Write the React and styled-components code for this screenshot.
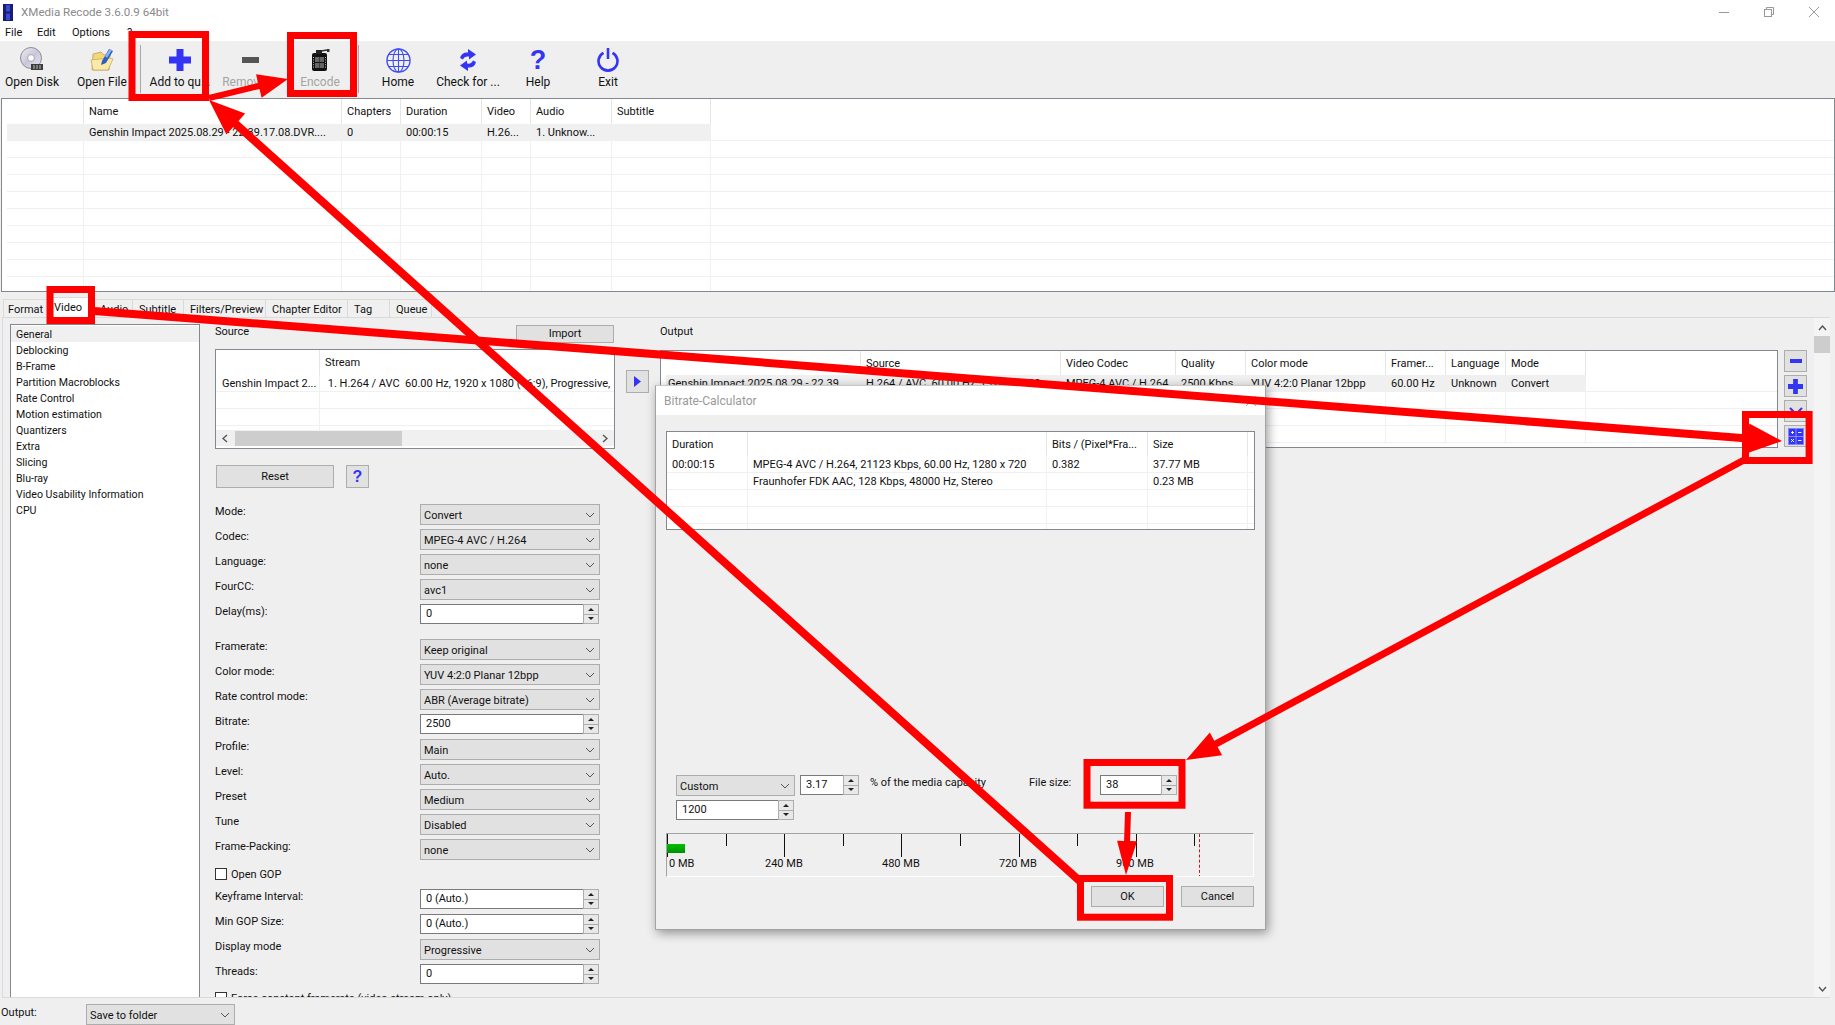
import styled, { createGlobalStyle } from "styled-components"

const GlobalStyle = createGlobalStyle`
  html, body { margin: 0; padding: 0; background: #efefef; }
  * { box-sizing: border-box; }
`

const Page = styled.div`
  position: relative;
  width: 1835px;
  height: 1025px;
  overflow: hidden;
  background: #efefef;
  color: #111;
  font-family: Roboto, "Liberation Sans", sans-serif;
  font-size: 11px;
  line-height: 14px;
`

const TitleBar = styled.div`
  display: flex;
  align-items: center;
  height: 22px;
  padding: 2px 16px 0 3px;
  background: #fff;
  color: #8a8a8a;
  font-size: 11.6px;
  gap: 8px;
`
const WindowButtons = styled.div`
  margin-left: auto;
  display: flex;
  gap: 35px;
  align-items: center;
`
const MenuBar = styled.div`
  display: flex;
  height: 19px;
  padding: 4px 0 0 5px;
  background: #fff;
`
const MenuItem = styled.span`
  width: ${p => p.$w}px;
`

const Toolbar = styled.div`
  display: flex;
  height: 57px;
`
const ToolButton = styled.div`
  width: ${p => p.$w || 70}px;
  padding: 7px ${p => (p.$w ? 3 : 0)}px 0 0;
  display: flex;
  flex-direction: column;
  align-items: center;
  gap: 3px;
  font-size: 12px;
  white-space: nowrap;
  color: ${p => (p.$off ? "#a4a4a4" : "#111")};
`
const IconSlot = styled.div`
  height: 24px;
  display: flex;
  align-items: center;
  justify-content: center;
`
const HelpMark = styled.span`
  font: bold ${p => p.$size}px/${p => p.$line}px "Liberation Sans", sans-serif;
  color: #3434f5;
`
const ToolSep = styled.div`
  width: 1px;
  height: 48px;
  margin: 4px 4px 0 3px;
  background: #a8a8a8;
`

const Table = styled.div`
  display: flex;
  flex-direction: column;
  overflow: hidden;
  width: ${p => p.$w};
  height: ${p => p.$h}px;
  margin-left: ${p => p.$ml || 0}px;
  padding-left: ${p => p.$pad || 0}px;
  background: #fff;
  border: 1px solid #828790;
`
const TableBody = styled.div`
  flex: 1;
  min-height: 0;
  overflow: hidden;
`
const Row = styled.div`
  display: grid;
  grid-template-columns: ${p => p.$cols};
  height: ${p => p.$height}px;
`
const HeadCell = styled.div`
  padding: 6px 0 0 ${p => p.$x || 5}px;
  border-right: ${p => (p.$last ? "none" : "1px solid #e6e6e6")};
  white-space: nowrap;
  overflow: hidden;
`
const Cell = styled.div`
  padding: 2px 0 0 ${p => p.$x || 5}px;
  border-bottom: 1px solid #f0f0f0;
  border-right: ${p => (p.$last ? "none" : "1px solid #f0f0f0")};
  background: ${p => (p.$hl ? "#f0f0f0" : "#fff")};
  white-space: pre;
  overflow: hidden;
  min-width: 0;
`

function GridTable({ cols, head, rows, blanks, headHeight, hl, firstX, w, h, ml, pad, children }) {
  const count = cols.trim().split(" ").length
  const blank = new Array(count).fill("")
  const all = [...rows, ...new Array(blanks).fill(blank)]
  return (
    <Table $w={w} $h={h} $ml={ml} $pad={pad}>
      <Row $cols={cols} $height={headHeight}>
        {head.map((t, i) => (
          <HeadCell key={i} $last={i === count - 1} $x={i === 0 ? firstX : undefined}>{t}</HeadCell>
        ))}
      </Row>
      <TableBody>
        {all.map((r, ri) => (
          <Row key={ri} $cols={cols} $height={17}>
            {r.map((t, i) => (
              <Cell
                key={i}
                $last={i === count - 1}
                $hl={hl && ri === 0 && i < count - 1}
                $x={i === 0 ? firstX : undefined}
              >
                {t}
              </Cell>
            ))}
          </Row>
        ))}
      </TableBody>
      {children}
    </Table>
  )
}

const Tabs = styled.div`
  display: flex;
  height: 25px;
  padding: 7px 0 0 3px;
`
const Tab = styled.div`
  width: ${p => p.$w}px;
  height: ${p => (p.$on ? 21 : 18)}px;
  margin-top: ${p => (p.$on ? -2 : 0)}px;
  padding: ${p => (p.$on ? 3 : 3)}px 0 0 ${p => (p.$first ? 4 : p.$on ? 3 : 6)}px;
  background: ${p => (p.$on ? "#fff" : "#f0f0f0")};
  border: 1px solid #dadada;
  border-bottom: none;
  border-left-width: ${p => (p.$first ? 1 : 0)}px;
  white-space: nowrap;
`

const Panel = styled.div`
  display: flex;
  align-items: flex-start;
  height: 681px;
  margin: 0 5px 0 2px;
  padding-left: 7px;
  overflow: hidden;
  border: 1px solid #dadada;
  border-right: none;
`
const SideList = styled.div`
  flex: none;
  width: 190px;
  height: 700px;
  margin-top: 6px;
  padding: 1px 0 0 0;
  background: #fff;
  border: 1px solid #828790;
`
const SideItem = styled.div`
  height: 16px;
  padding: 2px 0 0 5px;
  font-size: 10.6px;
  background: ${p => (p.$on ? "#f0f0f0" : "transparent")};
`
const Column = styled.div`
  flex: none;
  width: ${p => p.$w}px;
  margin: 7px 0 0 ${p => p.$ml}px;
`
const SectionHead = styled.div`
  display: flex;
  justify-content: space-between;
  height: ${p => p.$h}px;
  margin-bottom: ${p => p.$mb}px;
`
const Button = styled.div`
  display: flex;
  align-items: center;
  justify-content: center;
  flex: none;
  width: ${p => p.$w}px;
  height: ${p => p.$h}px;
  margin-left: ${p => p.$ml || 0}px;
  margin-right: ${p => p.$mr || 0}px;
  margin-top: ${p => p.$mt || 0}px;
  background: #e1e1e1;
  border: 1px solid #adadad;
`
const ResetRow = styled.div`
  display: flex;
  margin: 16px 0;
`
const FormRow = styled.div`
  display: grid;
  grid-template-columns: 205px 180px;
  height: 21px;
  margin-bottom: ${p => p.$mb || 4}px;
`
const FormLabel = styled.span`
  padding-top: 1px;
`
const CheckRow = styled.div`
  display: flex;
  align-items: flex-start;
  gap: 4px;
  height: 21px;
  margin-bottom: 4px;
  padding-top: ${p => p.$top}px;
  white-space: nowrap;
`
const CheckBox = styled.div`
  flex: none;
  width: 12px;
  height: 12px;
  background: #fff;
  border: 1px solid #333;
`
const SelectBox = styled.div`
  display: flex;
  align-items: center;
  justify-content: space-between;
  width: ${p => (p.$w ? `${p.$w}px` : "auto")};
  height: 21px;
  padding: 0 4px 0 3px;
  background: #e1e1e1;
  border: 1px solid #adadad;
`
const SelectText = styled.span`
  padding-top: 2px;
`
const SpinBox = styled.div`
  display: flex;
  width: ${p => (p.$w ? `${p.$w}px` : "auto")};
  height: 20px;
  padding-right: 1px;
`
const SpinText = styled.div`
  flex: 1;
  padding: 2px 0 0 5px;
  background: #fff;
  border: 1px solid #7a7a7a;
  border-right: none;
`
const SpinArrows = styled.div`
  flex: none;
  display: flex;
  flex-direction: column;
  width: 16px;
  background: #efefef;
  border: 1px solid #adadad;
`
const SpinPart = styled.div`
  flex: 1;
  display: flex;
  align-items: center;
  justify-content: center;
  background: #e8e8e8;
  border-top: ${p => (p.$down ? "1px solid #adadad" : "none")};
`
const ArrowUp = styled.div`
  width: 0;
  height: 0;
  border-left: 3px solid transparent;
  border-right: 3px solid transparent;
  border-${p => (p.$down ? "top" : "bottom")}: 3px solid #222;
`

const HScroll = styled.div`
  flex: none;
  display: flex;
  align-items: center;
  height: 16px;
  margin: 0 0 2px;
  background: #f0f0f0;
`
const HThumb = styled.div`
  width: 167px;
  height: 15px;
  margin: 0 auto 0 1px;
  background: #cdcdcd;
`
const ScrollEnd = styled.span`
  flex: none;
  width: 18px;
  display: flex;
  justify-content: center;
`

const SideButtons = styled.div`
  flex: none;
  display: flex;
  flex-direction: column;
  gap: 3px;
  margin: 32px 0 0 6px;
`
const VScroll = styled.div`
  flex: none;
  display: flex;
  flex-direction: column;
  align-items: center;
  width: 16px;
  height: 680px;
  margin-left: 7px;
  padding-top: 7px;
  background: #f4f4f4;
`
const VThumb = styled.div`
  width: 16px;
  height: 17px;
  margin: 5px 0 auto;
  background: #cdcdcd;
`

const OutputRow = styled.div`
  display: flex;
  padding: 6px 0 0 1px;
`
const OutputLabel = styled.div`
  width: 85px;
  padding-top: 2px;
`

const Dialog = styled.div`
  position: absolute;
  left: 655px;
  top: 385px;
  width: 611px;
  height: 545px;
  background: #efefef;
  border: 1px solid #a3a3a3;
  border-top-color: #c8c8c8;
  box-shadow: 2px 3px 10px rgba(0, 0, 0, 0.4);
  z-index: 5;
`
const DialogTitle = styled.div`
  display: flex;
  align-items: center;
  justify-content: space-between;
  height: 29px;
  padding: 0 9px 0 8px;
  background: #fff;
  color: #999;
  font-size: 12px;
`
const DialogBody = styled.div`
  padding: 16px 11px 0 10px;
`
const CalcRow = styled.div`
  display: flex;
  align-items: flex-start;
  margin-top: ${p => p.$mt}px;
  padding-left: 10px;
`
const CalcLabel = styled.div`
  flex: none;
  width: ${p => p.$w}px;
  margin-left: ${p => p.$ml || 0}px;
  padding-top: 1px;
  white-space: nowrap;
`
const Ruler = styled.div`
  position: relative;
  height: 44px;
  margin-top: 13px;
  overflow: hidden;
  border: 1px solid #fff;
  border-top-color: #a3a3a3;
  border-left-color: #a3a3a3;
`
const TickRow = styled.div`
  display: flex;
  height: 23px;
`
const Tick = styled.div`
  flex: none;
  width: 58.6px;
  height: ${p => (p.$major ? 23 : 12)}px;
  border-left: 1px solid #111;
`
const RulerLabels = styled.div`
  display: flex;
  padding-left: 2px;
  white-space: nowrap;
`
const RulerLabel = styled.div`
  flex: none;
  width: ${p => p.$w}px;
`
const UsedBar = styled.div`
  position: absolute;
  left: 0;
  top: 10px;
  width: 18px;
  height: 9px;
  background: linear-gradient(#00c000, #009000);
`
const LimitLine = styled.div`
  position: absolute;
  left: 532px;
  top: 0;
  height: 44px;
  border-left: 1px dashed #c8141e;
`
const DialogButtons = styled.div`
  display: flex;
  justify-content: flex-end;
  gap: 17px;
  margin-top: 9px;
`
const Overlay = styled.svg`
  position: absolute;
  left: 0;
  top: 0;
  z-index: 10;
  pointer-events: none;
`

const blue = "#3434f5"

const Chevron = () => (
  <svg width="10" height="6" viewBox="0 0 10 6"><path d="M1 1l4 4 4-4" fill="none" stroke="#555" /></svg>
)
const Select = ({ value, w }) => (
  <SelectBox $w={w}><SelectText>{value}</SelectText><Chevron /></SelectBox>
)
const Spin = ({ value, w }) => (
  <SpinBox $w={w}>
    <SpinText>{value}</SpinText>
    <SpinArrows>
      <SpinPart><ArrowUp /></SpinPart>
      <SpinPart $down><ArrowUp $down /></SpinPart>
    </SpinArrows>
  </SpinBox>
)

const FilmIcon = () => (
  <svg width="10" height="17" viewBox="0 0 10 17">
    <rect width="10" height="17" fill="#1c1c6e" />
    <rect x="3" y="1" width="4" height="6.5" fill="#3a49d8" />
    <rect x="3" y="9.5" width="4" height="6.5" fill="#3a49d8" />
  </svg>
)
const DiskIcon = () => (
  <svg width="26" height="26" viewBox="0 0 26 26">
    <defs>
      <linearGradient id="cd" x1="0" y1="0" x2="1" y2="1">
        <stop offset="0" stopColor="#eef0f4" />
        <stop offset="0.5" stopColor="#c9c6dc" />
        <stop offset="1" stopColor="#e8e8ee" />
      </linearGradient>
    </defs>
    <circle cx="12" cy="11" r="10.5" fill="url(#cd)" stroke="#8d8d94" />
    <circle cx="12" cy="11" r="3.4" fill="#fff" stroke="#a5a5ad" />
    <rect x="12" y="17" width="12" height="6" fill="#3c3c3c" />
    <path d="M14 19h8M14 21h8" stroke="#ddd" strokeWidth="0.8" strokeDasharray="2 1" />
  </svg>
)
const FolderIcon = () => (
  <svg width="26" height="26" viewBox="0 0 26 26">
    <path d="M4 7l8-2 3 3 6-1-1 16H3z" fill="#f3d67a" stroke="#b8964a" strokeWidth="0.7" />
    <path d="M2 13l19-2 3 1-5 11H4z" fill="#fbe9a8" stroke="#c4a452" strokeWidth="0.7" />
    <path d="M13 14l7-12 4 2-7 12-5 2z" fill="#2c5fc4" />
    <path d="M16 9l5-7 2 1-5 8z" fill="#8cb4ec" />
  </svg>
)
const PlusIcon = ({ size = 22 }) => (
  <svg width={size} height={size} viewBox="0 0 22 22">
    <path d="M7.5 0h7v7.5H22v7h-7.5V22h-7v-7.5H0v-7h7.5z" fill={blue} />
  </svg>
)
const MinusIcon = () => (
  <svg width="17" height="6" viewBox="0 0 17 6"><rect width="17" height="6" fill="#555" /></svg>
)
const EncodeIcon = () => (
  <svg width="20" height="22" viewBox="0 0 20 22">
    <path d="M4 4h11a2 2 0 0 1 2 2v14a2 2 0 0 1-2 2H4a2 2 0 0 1-2-2V6a2 2 0 0 1 2-2z" fill="#111" />
    <rect x="6" y="1" width="6" height="4" fill="#222" />
    <path d="M11 2l6-1" stroke="#333" strokeWidth="1.5" />
    <rect x="17" y="0" width="2.5" height="3" fill="#333" />
    <rect x="5" y="8" width="9" height="11" fill="#666" />
    <path d="M5 13.5h9" stroke="#111" />
    <path d="M9.5 8v11" stroke="#222" strokeWidth="0.6" />
    <path d="M3.5 8v11M15.5 8v11" stroke="#bbb" strokeDasharray="1 1.4" />
  </svg>
)
const GlobeIcon = () => (
  <svg width="25" height="25" viewBox="0 0 25 25" fill="none" stroke="#3d4df0" strokeWidth="1.1">
    <circle cx="12.5" cy="12.5" r="11.5" strokeWidth="1.4" />
    <ellipse cx="12.5" cy="12.5" rx="5.5" ry="11.5" />
    <path d="M12.5 1v23M1 12.5h23M2.8 6.5h19.4M2.8 18.5h19.4" />
  </svg>
)
const RefreshIcon = () => (
  <svg width="18" height="22" viewBox="0 0 18 22" fill={blue}>
    <path d="M1 9c1-4 4-6 8-5.500V0l8 5.500-7 5V7.500C7 7 5 8 4 10.500z" />
    <path d="M17 13c-1 4-4 6-8 5.500V22l-8-5.500 7-5v3c3 .5 5-.5 6-3z" />
  </svg>
)
const PowerIcon = () => (
  <svg width="22" height="24" viewBox="0 0 22 24" fill="none" stroke={blue} strokeWidth="2.6">
    <path d="M6.500 4.800a9.500 9.500 0 1 0 9 0" />
    <path d="M11 0v11" />
  </svg>
)
const ChevronX = () => (
  <svg width="14" height="9" viewBox="0 0 14 9"><path d="M1 1l6 6 6-6" fill="none" stroke={blue} strokeWidth="2" /></svg>
)
const CalcIcon = () => (
  <svg width="16" height="17" viewBox="0 0 16 17">
    <rect width="16" height="17" fill={blue} />
    <rect x="0.5" y="0.5" width="15" height="16" fill="none" stroke="#7f86fa" />
    <path d="M8 0v17M0 8.500h16" stroke="#9aa0fc" strokeWidth="0.8" />
    <path d="M3 4.500h3M4.500 3v3M10 4.500h3.500M3 11l3 3M6 11l-3 3M10 12.500h3.500" stroke="#fff" strokeWidth="0.9" />
  </svg>
)

function Arrow({ from, to, w = 7, hl = 36, hw = 26 }) {
  const dx = to[0] - from[0]
  const dy = to[1] - from[1]
  const len = Math.hypot(dx, dy)
  const ux = dx / len
  const uy = dy / len
  const bx = to[0] - ux * hl
  const by = to[1] - uy * hl
  const px = -uy
  const py = ux
  const pts = [
    [from[0] + (px * w) / 2, from[1] + (py * w) / 2],
    [bx + (px * w) / 2, by + (py * w) / 2],
    [bx + (px * hw) / 2, by + (py * hw) / 2],
    to,
    [bx - (px * hw) / 2, by - (py * hw) / 2],
    [bx - (px * w) / 2, by - (py * w) / 2],
    [from[0] - (px * w) / 2, from[1] - (py * w) / 2],
  ]
  return <polygon points={pts.map(p => p.join(",")).join(" ")} fill="#fe0000" />
}

const boxes = [
  [128.5, 31, 209, 101],
  [287, 32, 357, 97],
  [46.5, 286, 95, 324],
  [1742, 411, 1812.6, 464],
  [1083.5, 759, 1185.5, 808.7],
  [1077, 875, 1173, 920.7],
]

const sideItems = ["General", "Deblocking", "B-Frame", "Partition Macroblocks", "Rate Control", "Motion estimation", "Quantizers", "Extra", "Slicing", "Blu-ray", "Video Usability Information", "CPU"]

const formTop = [
  { l: "Mode:", v: "Convert" },
  { l: "Codec:", v: "MPEG-4 AVC / H.264" },
  { l: "Language:", v: "none" },
  { l: "FourCC:", v: "avc1" },
  { l: "Delay(ms):", v: "0", spin: true, mb: 14 },
  { l: "Framerate:", v: "Keep original" },
  { l: "Color mode:", v: "YUV 4:2:0 Planar 12bpp" },
  { l: "Rate control mode:", v: "ABR (Average bitrate)" },
  { l: "Bitrate:", v: "2500", spin: true },
  { l: "Profile:", v: "Main" },
  { l: "Level:", v: "Auto." },
  { l: "Preset", v: "Medium" },
  { l: "Tune", v: "Disabled" },
  { l: "Frame-Packing:", v: "none" },
]
const formBottom = [
  { l: "Keyframe Interval:", v: "0 (Auto.)", spin: true },
  { l: "Min GOP Size:", v: "0 (Auto.)", spin: true },
  { l: "Display mode", v: "Progressive" },
  { l: "Threads:", v: "0", spin: true },
]
const tabs = [["Format", 48], ["Video", 43], ["Audio", 39], ["Subtitle", 51], ["Filters/Preview", 82], ["Chapter Editor", 82], ["Tag", 42], ["Queue", 42]]

const FormRows = ({ items }) => items.map(r => (
  <FormRow key={r.l + r.v} $mb={r.mb}>
    <FormLabel>{r.l}</FormLabel>
    {r.spin ? <Spin value={r.v} /> : <Select value={r.v} />}
  </FormRow>
))

export default function App() {
  return (
    <Page>
      <GlobalStyle />
      <TitleBar>
        <FilmIcon />
        <span>XMedia Recode 3.6.0.9 64bit</span>
        <WindowButtons>
          <svg width="10" height="10" viewBox="0 0 10 10"><path d="M0 5.500h10" stroke="#999" /></svg>
          <svg width="10" height="10" viewBox="0 0 10 10" fill="none" stroke="#999"><rect x="0.500" y="2.500" width="7" height="7" /><path d="M2.500 2.500v-2h7v7h-2" /></svg>
          <svg width="10" height="10" viewBox="0 0 10 10"><path d="M0 0l10 10M10 0L0 10" stroke="#999" /></svg>
        </WindowButtons>
      </TitleBar>
      <MenuBar>
        <MenuItem $w={32}>File</MenuItem>
        <MenuItem $w={35}>Edit</MenuItem>
        <MenuItem $w={55}>Options</MenuItem>
        <MenuItem $w={10}>?</MenuItem>
      </MenuBar>
      <Toolbar>
        <ToolButton $w={67}><IconSlot><DiskIcon /></IconSlot>Open Disk</ToolButton>
        <ToolButton><IconSlot><FolderIcon /></IconSlot>Open File</ToolButton>
        <ToolSep />
        <ToolButton><IconSlot><PlusIcon /></IconSlot>Add to qu...</ToolButton>
        <ToolButton $off><IconSlot><MinusIcon /></IconSlot>Remove ...</ToolButton>
        <ToolButton $off><IconSlot><EncodeIcon /></IconSlot>Encode</ToolButton>
        <ToolSep />
        <ToolButton><IconSlot><GlobeIcon /></IconSlot>Home</ToolButton>
        <ToolButton><IconSlot><RefreshIcon /></IconSlot>Check for ...</ToolButton>
        <ToolButton><IconSlot><HelpMark $size={27} $line={24}>?</HelpMark></IconSlot>Help</ToolButton>
        <ToolButton><IconSlot><PowerIcon /></IconSlot>Exit</ToolButton>
      </Toolbar>

      <GridTable
        w="1834px"
        h={194}
        ml={1}
        pad={5}
        cols="77px 258px 59px 81px 49px 81px 99px 1fr"
        headHeight={25}
        hl
        head={["", "Name", "Chapters", "Duration", "Video", "Audio", "Subtitle", ""]}
        rows={[["", "Genshin Impact 2025.08.29 - 22.39.17.08.DVR....", "0", "00:00:15", "H.26...", "1. Unknow...", "", ""]]}
        blanks={10}
      />

      <Tabs>
        {tabs.map(([t, w], i) => (
          <Tab key={t} $w={w} $on={t === "Video"} $first={i === 0}>{t}</Tab>
        ))}
      </Tabs>

      <Panel>
        <SideList>
          {sideItems.map((t, i) => <SideItem key={t} $on={i === 0}>{t}</SideItem>)}
        </SideList>

        <Column $w={400} $ml={15}>
          <SectionHead $h={18} $mb={6}>
            <span>Source</span>
            <Button $w={98} $h={18} $mr={1}>Import</Button>
          </SectionHead>
          <GridTable
            w="400px"
            h={100}
            cols="104px 1fr"
            headHeight={25}
            firstX={6}
            head={["", "Stream"]}
            rows={[["Genshin Impact 2...", " 1. H.264 / AVC  60.00 Hz, 1920 x 1080 (16:9), Progressive,"]]}
            blanks={3}
          >
            <HScroll>
              <ScrollEnd><svg width="6" height="9" viewBox="0 0 6 9"><path d="M5 1L1 4.500 5 8" fill="none" stroke="#555" strokeWidth="1.4" /></svg></ScrollEnd>
              <HThumb />
              <ScrollEnd><svg width="6" height="9" viewBox="0 0 6 9"><path d="M1 1l4 3.500L1 8" fill="none" stroke="#555" strokeWidth="1.4" /></svg></ScrollEnd>
            </HScroll>
          </GridTable>
          <ResetRow>
            <Button $w={118} $h={23} $ml={1}>Reset</Button>
            <Button $w={23} $h={23} $ml={12}><HelpMark $size={16} $line={18}>?</HelpMark></Button>
          </ResetRow>
          <FormRows items={formTop} />
          <CheckRow $top={4}><CheckBox />Open GOP</CheckRow>
          <FormRows items={formBottom} />
          <CheckRow $top={3}><CheckBox />Force constant framerate (video stream only)</CheckRow>
        </Column>

        <Button $w={23} $h={23} $ml={11} $mt={52}>
          <svg width="7" height="11" viewBox="0 0 7 11"><path d="M0 0l7 5.500L0 11z" fill={blue} /></svg>
        </Button>

        <Column $w={1118} $ml={11}>
          <SectionHead $h={14} $mb={11}><span>Output</span></SectionHead>
          <GridTable
            w="1118px"
            h={98}
            pad={5}
            cols="195px 200px 115px 70px 140px 60px 60px 80px 1fr"
            headHeight={24}
            hl
            firstX={2}
            head={["", "Source", "Video Codec", "Quality", "Color mode", "Framer...", "Language", "Mode", ""]}
            rows={[["Genshin Impact 2025.08.29 - 22.39", "H.264 / AVC  60.00 Hz, 1920 x 1080", "MPEG-4 AVC / H.264", "2500 Kbps", "YUV 4:2:0 Planar 12bpp", "60.00 Hz", "Unknown", "Convert", ""]]}
            blanks={3}
          />
        </Column>

        <SideButtons>
          <Button $w={23} $h={22}><svg width="12" height="4" viewBox="0 0 12 4"><rect width="12" height="4" fill={blue} /></svg></Button>
          <Button $w={23} $h={22}><PlusIcon size={15} /></Button>
          <Button $w={23} $h={22}><ChevronX /></Button>
          <Button $w={23} $h={22}><CalcIcon /></Button>
        </SideButtons>

        <VScroll>
          <svg width="9" height="6" viewBox="0 0 9 6"><path d="M1 5l3.500-4L8 5" fill="none" stroke="#555" strokeWidth="1.4" /></svg>
          <VThumb />
          <svg width="9" height="12" viewBox="0 0 9 12"><path d="M1 1l3.500 4L8 1" fill="none" stroke="#555" strokeWidth="1.4" /></svg>
        </VScroll>
      </Panel>

      <OutputRow>
        <OutputLabel>Output:</OutputLabel>
        <Select value="Save to folder" w={149} />
      </OutputRow>

      <Dialog>
        <DialogTitle>
          <span>Bitrate-Calculator</span>
          <svg width="10" height="10" viewBox="0 0 10 10"><path d="M0 0l10 10M10 0L0 10" stroke="#aaa" /></svg>
        </DialogTitle>
        <DialogBody>
          <GridTable
            w="589px"
            h={99}
            cols="81px 299px 101px 100px 1fr"
            headHeight={24}
            head={["Duration", "", "Bits / (Pixel*Fra...", "Size", ""]}
            rows={[
              ["00:00:15", "MPEG-4 AVC / H.264, 21123 Kbps, 60.00 Hz, 1280 x 720", "0.382", "37.77 MB", ""],
              ["", "Fraunhofer FDK AAC, 128 Kbps, 48000 Hz, Stereo", "", "0.23 MB", ""],
            ]}
            blanks={3}
          />
          <CalcRow $mt={245}>
            <Select value="Custom" w={119} />
            <CalcLabel $w={5} />
            <Spin value="3.17" w={60} />
            <CalcLabel $w={159} $ml={10}>% of the media capacity</CalcLabel>
            <CalcLabel $w={71}>File size:</CalcLabel>
            <Spin value="38" w={78} />
          </CalcRow>
          <CalcRow $mt={4}>
            <Spin value="1200" w={119} />
          </CalcRow>
          <Ruler>
            <TickRow>
              {new Array(10).fill(0).map((_, i) => <Tick key={i} $major={i % 2 === 0} />)}
            </TickRow>
            <RulerLabels>
              <RulerLabel $w={96}>0 MB</RulerLabel>
              <RulerLabel $w={117}>240 MB</RulerLabel>
              <RulerLabel $w={117}>480 MB</RulerLabel>
              <RulerLabel $w={117}>720 MB</RulerLabel>
              <RulerLabel $w={100}>960 MB</RulerLabel>
            </RulerLabels>
            <UsedBar />
            <LimitLine />
          </Ruler>
          <DialogButtons>
            <Button $w={73} $h={21}>OK</Button>
            <Button $w={73} $h={21}>Cancel</Button>
          </DialogButtons>
        </DialogBody>
      </Dialog>

      <Overlay width="1835" height="1025" viewBox="0 0 1835 1025">
        {boxes.map(([x1, y1, x2, y2], i) => (
          <rect key={i} x={x1 + 3.5} y={y1 + 3.5} width={x2 - x1 - 7} height={y2 - y1 - 7} fill="none" stroke="#fe0000" strokeWidth="7" />
        ))}
        <Arrow from={[1082, 883]} to={[209, 100]} w={8} hl={36} hw={28} />
        <Arrow from={[209, 98]} to={[288, 79]} w={6} hl={30} hw={24} />
        <Arrow from={[94, 311]} to={[1782, 441]} w={8} hl={34} hw={30} />
        <Arrow from={[1744, 460]} to={[1186, 760]} w={7} hl={34} hw={26} />
        <Arrow from={[1128, 812]} to={[1126, 875]} w={6} hl={34} hw={20} />
      </Overlay>
    </Page>
  )
}
